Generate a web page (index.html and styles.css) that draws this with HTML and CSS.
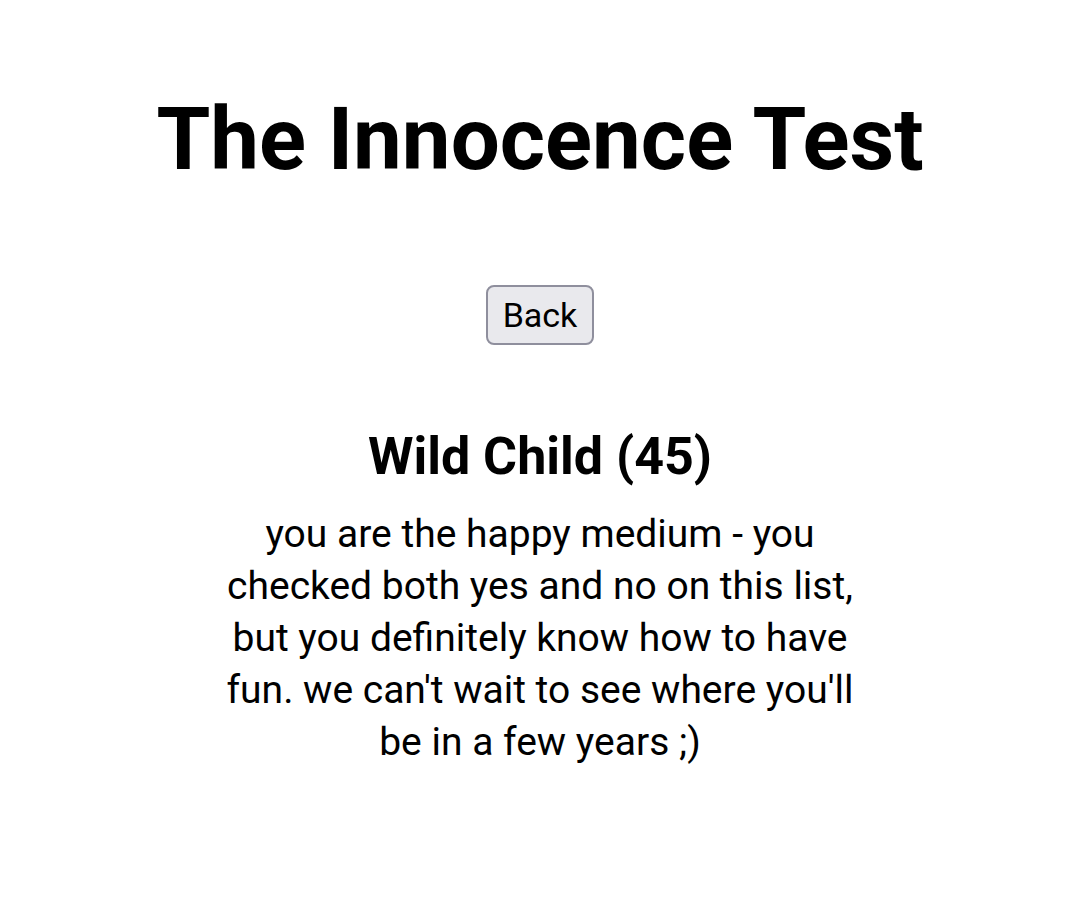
FILE: index.html
```html
<!DOCTYPE html>
<html>
<head>
<meta charset="utf-8">
<link rel="stylesheet" href="styles.css">
</head>
<body>
<main class="page">
  <h1 class="title">The Innocence Test</h1>
  <button class="back">Back</button>
  <section class="result">
    <h2 class="result-name">Wild Child (45)</h2>
    <p class="result-text">you are the happy medium - you checked both yes and no on this list, but you definitely know how to have fun. we can't wait to see where you'll be in a few years ;)</p>
  </section>
</main>
</body>
</html>
```
FILE: styles.css
```css
html, body {
  margin: 0;
  padding: 0;
  background: #ffffff;
}
body {
  font-family: Roboto, "Noto Sans", sans-serif;
  color: #000;
}
.page {
  display: flex;
  flex-direction: column;
  align-items: center;
  text-align: center;
  padding-top: 89px;
}
.title {
  margin: 0;
  font-size: 87px;
  font-weight: 700;
  line-height: 1.17;
}
.back {
  margin-top: 94px;
  font-family: Roboto, sans-serif;
  font-size: 34px;
  padding: 8px 15px;
  background: #e9e9ed;
  border: 2px solid #8f8f9d;
  border-radius: 8px;
  color: #000;
  line-height: 40px;
}
.result {
  margin-top: 82px;
  max-width: 640px;
  display: flex;
  flex-direction: column;
  align-items: center;
}
.result-name {
  margin: 0;
  font-size: 52px;
  font-weight: 700;
  line-height: 1.17;
}
.result-text {
  margin: 20px 0 0;
  font-size: 39px;
  line-height: 52px;
}
```
